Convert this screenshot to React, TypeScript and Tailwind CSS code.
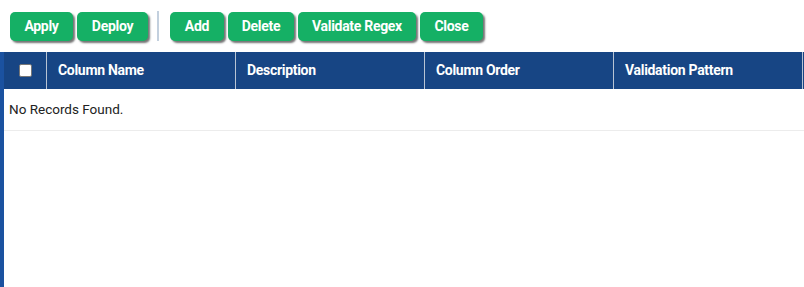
const buttonsLeft = [
  { label: "Apply", w: "w-[63px]" },
  { label: "Deploy", w: "w-[71px]" },
];
const buttonsRight = [
  { label: "Add", w: "w-[54px]" },
  { label: "Delete", w: "w-[66px]" },
  { label: "Validate Regex", w: "w-[118px]" },
  { label: "Close", w: "w-[63px]" },
];
const columns = ["Column Name", "Description", "Column Order", "Validation Pattern"];

function GreenButton({ label, w }: { label: string; w: string }) {
  return (
    <button
      className={`${w} h-[29px] rounded-[5px] bg-[#15b065] text-center text-[14px] font-bold tracking-[-0.3px] text-white shadow-[2px_2px_2px_rgba(0,0,0,0.55)]`}
    >
      {label}
    </button>
  );
}

export default function App() {
  return (
    <div className="flex h-screen flex-col bg-white font-['Roboto',sans-serif]">
      <div className="flex items-center gap-[4px] pl-[10px] pt-[11px] pb-[11px]">
        {buttonsLeft.map((b) => (
          <GreenButton key={b.label} {...b} />
        ))}
        <div className="ml-[5px] mr-[7px] h-[30px] w-[2px] bg-[#c3d0de]" />
        {buttonsRight.map((b) => (
          <GreenButton key={b.label} {...b} />
        ))}
      </div>

      <div className="flex flex-1 border-l-4 border-[#1b52a0]">
        <div className="flex-1">
          <div className="flex h-[37px] bg-[#174584] text-[14px] font-bold tracking-[-0.3px] text-white">
            <div className="flex w-[43px] items-center justify-center border-r border-[#b8c4d4]">
              <div className="h-[13px] w-[13px] rounded-[2px] border border-[#777] bg-white" />
            </div>
            {columns.map((c) => (
              <div key={c} className="flex w-[189px] items-center border-r border-[#b8c4d4] pl-[11px]">
                {c}
              </div>
            ))}
          </div>
          <div className="flex h-[42px] items-center border-b border-[#ececec] pl-[5px] text-[13.5px] text-[#222]">
            No Records Found.
          </div>
        </div>
      </div>
    </div>
  );
}
